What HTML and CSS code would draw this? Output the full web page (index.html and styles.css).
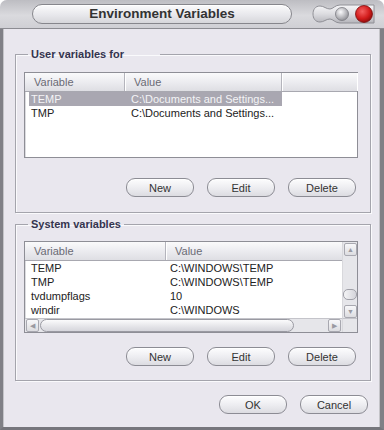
FILE: index.html
```html
<!DOCTYPE html>
<html lang="en">
<head>
    <meta charset="UTF-8">
    <title>Environment Variables</title>
    <link rel="stylesheet" href="styles.css">
</head>
<body>
    <div class="window">
        <div class="titlebar">
            <div class="title-pill">Environment Variables</div>
            <svg class="knobs" width="72" height="29" viewBox="0 0 72 29">
                <defs>
                    <linearGradient id="bone" x1="0" y1="0" x2="0" y2="1">
                        <stop offset="0" stop-color="#f6f6f8"/>
                        <stop offset="0.5" stop-color="#dcdce0"/>
                        <stop offset="1" stop-color="#b4b4ba"/>
                    </linearGradient>
                    <radialGradient id="grey" cx="0.4" cy="0.35" r="0.7">
                        <stop offset="0" stop-color="#fafafc"/>
                        <stop offset="1" stop-color="#8c8c92"/>
                    </radialGradient>
                    <radialGradient id="red" cx="0.4" cy="0.35" r="0.7">
                        <stop offset="0" stop-color="#f46060"/>
                        <stop offset="0.6" stop-color="#d21c1c"/>
                        <stop offset="1" stop-color="#8a0a0a"/>
                    </radialGradient>
                </defs>
                <path d="M8 6 C12 6 14 9 18 9 C21 9 23 5 28 5 L62 5 L62 23 L28 23 C23 23 21 19 18 19 C14 19 12 22 8 22 C3 22 1 18 1 14 C1 10 3 6 8 6 Z" fill="url(#bone)" stroke="#909096" stroke-width="1"/>
                <circle cx="30" cy="14" r="6.5" fill="url(#grey)" stroke="#7a7a80" stroke-width="0.8"/>
                <circle cx="52" cy="14" r="8.5" fill="url(#red)" stroke="#7a1010" stroke-width="0.8"/>
            </svg>
        </div>
        <div class="content">
            <fieldset class="group group-user">
                <legend>User variables for</legend>
                <div class="list list-user">
                    <div class="list-head head-user">
                        <span>Variable</span>
                        <span>Value</span>
                        <span></span>
                    </div>
                    <div class="row row-user selected"><span>TEMP</span><span>C:\Documents and Settings...</span></div>
                    <div class="row row-user"><span>TMP</span><span>C:\Documents and Settings...</span></div>
                </div>
                <div class="buttons">
                    <button class="btn">New</button>
                    <button class="btn">Edit</button>
                    <button class="btn">Delete</button>
                </div>
            </fieldset>

            <fieldset class="group group-sys">
                <legend>System variables</legend>
                <div class="list list-sys">
                    <div class="sys-main">
                        <div class="list-head head-sys">
                            <span>Variable</span>
                            <span>Value</span>
                        </div>
                        <div class="row row-sys"><span>TEMP</span><span>C:\WINDOWS\TEMP</span></div>
                        <div class="row row-sys"><span>TMP</span><span>C:\WINDOWS\TEMP</span></div>
                        <div class="row row-sys"><span>tvdumpflags</span><span>10</span></div>
                        <div class="row row-sys"><span>windir</span><span>C:\WINDOWS</span></div>
                    </div>
                    <div class="vscroll">
                        <div class="arrow">&#9650;</div>
                        <div class="vtrack"><div class="vthumb"></div></div>
                        <div class="arrow">&#9660;</div>
                    </div>
                    <div class="hscroll">
                        <div class="arrow">&#9664;</div>
                        <div class="htrack"><div class="hthumb"></div></div>
                        <div class="arrow">&#9654;</div>
                    </div>
                    <div class="corner"></div>
                </div>
                <div class="buttons">
                    <button class="btn">New</button>
                    <button class="btn">Edit</button>
                    <button class="btn">Delete</button>
                </div>
            </fieldset>

            <div class="footer">
                <button class="btn">OK</button>
                <button class="btn">Cancel</button>
            </div>
        </div>
    </div>
</body>
</html>
```

FILE: styles.css
```css
body {
    margin: 0;
    background: #fff;
    font-family: "Liberation Sans", Arial, sans-serif;
    font-size: 11px;
    color: #222;
}
.window {
    width: 384px;
    height: 430px;
    box-sizing: border-box;
    display: flex;
    flex-direction: column;
    background: #e9e7ee;
    border-radius: 7px 7px 0 0;
    overflow: hidden;
}
.titlebar {
    height: 29px;
    box-sizing: border-box;
    border-bottom: 1px solid #8c8c92;
    background: linear-gradient(#bdbdc2, #dadade 55%, #cfcfd4);
    display: flex;
    align-items: center;
}
.title-pill {
    margin-left: 32px;
    width: 260px;
    height: 20px;
    box-sizing: border-box;
    border: 1px solid #86868c;
    border-radius: 10px;
    background: linear-gradient(#fbfbfc, #e6e6ea 60%, #d6d6da);
    box-shadow: inset 0 1px 0 #fff;
    text-align: center;
    font-weight: bold;
    font-size: 13.5px;
    line-height: 18px;
    color: #333;
}
.knobs {
    margin-left: auto;
    display: block;
}
.content {
    flex: 1;
    display: flex;
    flex-direction: column;
    border-left: 3px solid #808086;
    border-right: 4px solid #808086;
    border-bottom: 3px solid #76767c;
    box-shadow: inset 1px 0 0 #c4c4c8, inset -1px 0 0 #c4c4c8;
}
.group {
    margin: 0 9px 0 12px;
    padding: 10px 12px 14px 8px;
    border: 1px solid #a4a4ac;
    box-shadow: inset 1px 1px 0 #fafafc, 1px 1px 0 #fafafc;
    min-width: 0;
}
.group-user {
    margin-top: 19px;
    padding-top: 11px;
    padding-bottom: 15px;
}
.group-sys {
    margin-top: 5px;
}
.group legend {
    padding: 0 3px;
    margin-left: 4px;
    font-weight: bold;
    line-height: 13px;
    color: #34344e;
}
.group-user legend {
    padding-right: 36px;
}
.list {
    border: 1px solid #8e8e96;
    background: #fff;
    box-shadow: inset 1px 1px 0 #dcdce0;
}
.list-user {
    height: 86px;
    box-sizing: border-box;
}
.list-head {
    display: grid;
    height: 19px;
    box-sizing: border-box;
    border-bottom: 1px solid #a8a8b0;
    background: linear-gradient(#fafafb, #ececf0 50%, #dedee3);
    color: #6a6a74;
    line-height: 18px;
}
.list-head span {
    padding-left: 9px;
    border-right: 1px solid #b4b4bc;
    box-shadow: 1px 0 0 #fff;
}
.head-user {
    grid-template-columns: 100px 157px 1fr;
}
.head-user span:last-child {
    border-right: none;
}
.head-sys {
    grid-template-columns: 141px 1fr;
}
.head-sys span:last-child {
    border-right: none;
}
.row {
    display: grid;
    height: 14px;
    line-height: 14px;
    white-space: nowrap;
}
.row span:first-child {
    padding-left: 2px;
}
.row span:last-child {
    padding-left: 6px;
}
.row-user {
    grid-template-columns: 96px 157px;
    width: 253px;
    margin-left: 4px;
}
.row-user:first-of-type {
    margin-top: 1px;
}
.selected {
    background: #a9a7b1;
    color: #f4f4f6;
}
.list-sys {
    height: 92px;
    box-sizing: border-box;
    display: grid;
    grid-template-columns: 1fr 15px;
    grid-template-rows: 1fr 14px;
}
.sys-main {
    overflow: hidden;
}
.row-sys {
    grid-template-columns: 137px 1fr;
    margin-left: 4px;
}
.row-sys span:first-child {
    padding-left: 2px;
}
.row-sys span:last-child {
    padding-left: 4px;
}
.vscroll {
    display: flex;
    flex-direction: column;
    background: #e6e6ea;
    border-left: 1px solid #d8d8dc;
}
.vtrack {
    flex: 1;
    display: flex;
    align-items: flex-end;
    justify-content: center;
    padding-bottom: 4px;
}
.vthumb {
    width: 13px;
    height: 9px;
    border: 1px solid #a0a0a8;
    border-radius: 5px;
    background: linear-gradient(90deg, #f4f4f6, #d4d4da);
}
.hscroll {
    display: flex;
    background: #e6e6ea;
    border-top: 1px solid #c4c4ca;
}
.htrack {
    flex: 1;
    display: flex;
}
.hthumb {
    width: 254px;
    box-sizing: border-box;
    border: 1px solid #9a9aa2;
    border-radius: 7px;
    background: linear-gradient(#fbfbfc, #e4e4e8 60%, #d6d6dc);
}
.corner {
    background: #e6e6ea;
    border-top: 1px solid #c4c4ca;
    border-left: 1px solid #d8d8dc;
}
.arrow {
    width: 13px;
    height: 13px;
    box-sizing: border-box;
    border: 1px solid #a8a8b0;
    border-radius: 2px;
    background: linear-gradient(#f8f8fa, #dcdce0);
    color: #9a9aa2;
    font-size: 7px;
    line-height: 11px;
    text-align: center;
}
.vscroll .arrow {
    margin: 1px 0 0 1px;
}
.hscroll .arrow {
    margin: 0 1px;
}
.buttons {
    display: flex;
    justify-content: flex-end;
    gap: 13px;
    margin-top: 20px;
    padding-right: 2px;
}
.group-sys .buttons {
    margin-top: 14px;
}
.btn {
    width: 68px;
    height: 19px;
    padding: 0;
    border: 1px solid #8c8c94;
    border-radius: 9px;
    background: linear-gradient(#fdfdfe, #ececf0 55%, #dcdce1);
    box-shadow: inset 0 1px 0 #fff;
    font-family: "Liberation Sans", Arial, sans-serif;
    font-size: 11px;
    color: #333;
}
.footer {
    display: flex;
    justify-content: flex-end;
    gap: 13px;
    margin: 14px 12px 0 0;
}
```
